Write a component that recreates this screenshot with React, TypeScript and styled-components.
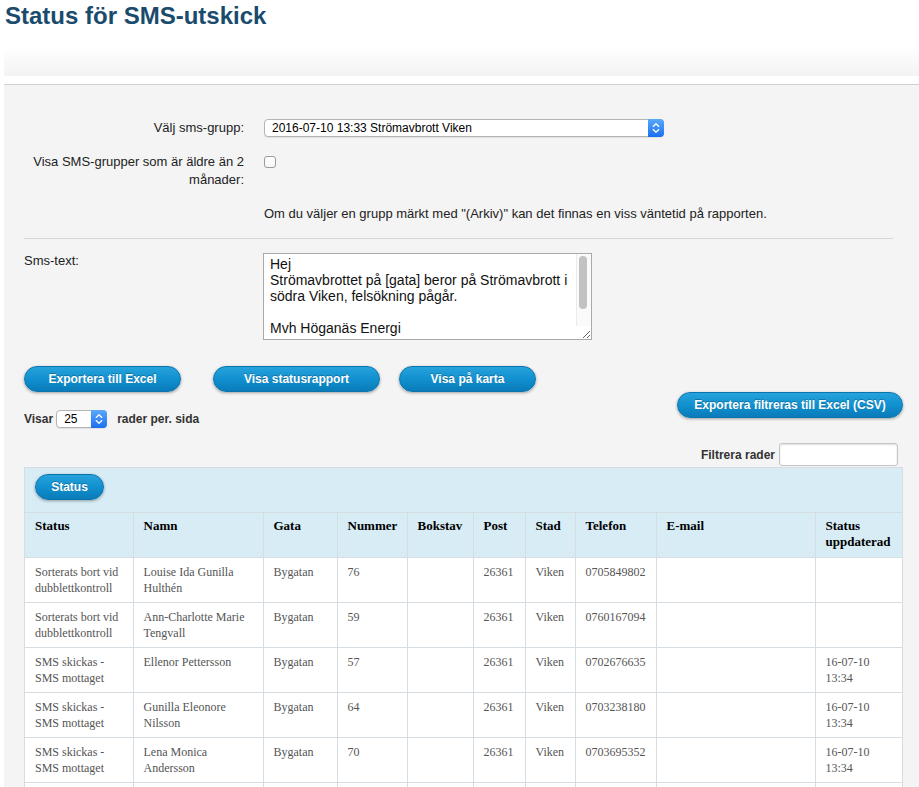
import React from "react";
import styled, { createGlobalStyle } from "styled-components";

const GlobalStyle = createGlobalStyle`
  html, body {
    margin: 0;
    padding: 0;
    background: #fff;
    overflow: hidden;
  }
  body {
    font-family: "Liberation Sans", Arial, sans-serif;
    color: #222;
  }
`;

const rows = [
  {
    status: "Sorterats bort vid dubblettkontroll",
    name: "Louise Ida Gunilla Hulthén",
    street: "Bygatan",
    no: "76",
    phone: "0705849802",
    updated: "",
  },
  {
    status: "Sorterats bort vid dubblettkontroll",
    name: "Ann-Charlotte Marie Tengvall",
    street: "Bygatan",
    no: "59",
    phone: "0760167094",
    updated: "",
  },
  {
    status: "SMS skickas - SMS mottaget",
    name: "Ellenor Pettersson",
    street: "Bygatan",
    no: "57",
    phone: "0702676635",
    updated: "16-07-10 13:34",
  },
  {
    status: "SMS skickas - SMS mottaget",
    name: "Gunilla Eleonore Nilsson",
    street: "Bygatan",
    no: "64",
    phone: "0703238180",
    updated: "16-07-10 13:34",
  },
  {
    status: "SMS skickas - SMS mottaget",
    name: "Lena Monica Andersson",
    street: "Bygatan",
    no: "70",
    phone: "0703695352",
    updated: "16-07-10 13:34",
  },
];

const columns = [
  { title: "Status", width: 108 },
  { title: "Namn", width: 130 },
  { title: "Gata", width: 74 },
  { title: "Nummer", width: 70 },
  { title: "Bokstav", width: 66 },
  { title: "Post", width: 52 },
  { title: "Stad", width: 50 },
  { title: "Telefon", width: 81 },
  { title: "E-mail", width: 159 },
  { title: "Status uppdaterad", width: 87 },
];

const smsText =
  "Hej\nStrömavbrottet på [gata] beror på Strömavbrott i södra Viken, felsökning pågår.\n\nMvh Höganäs Energi\n\n\n";

function Stepper() {
  return (
    <StepperBox>
      <svg width="16" height="18" viewBox="0 0 16 18">
        <path
          d="M5.2 7.4 L8 4.8 L10.8 7.4"
          fill="none"
          stroke="#fff"
          strokeWidth="1.3"
          strokeLinecap="round"
          strokeLinejoin="round"
        />
        <path
          d="M5.2 10.6 L8 13.2 L10.8 10.6"
          fill="none"
          stroke="#fff"
          strokeWidth="1.3"
          strokeLinecap="round"
          strokeLinejoin="round"
        />
      </svg>
    </StepperBox>
  );
}

function App() {
  return (
    <>
      <GlobalStyle />
      <Title>Status för SMS-utskick</Title>
      <Band />
      <Panel>
        <Form>
          <Label>Välj sms-grupp:</Label>
          <SelectWrap $width={400}>
            <Select defaultValue="a">
              <option value="a">2016-07-10 13:33 Strömavbrott Viken</option>
            </Select>
            <Stepper />
          </SelectWrap>

          <Label>Visa SMS-grupper som är äldre än 2 månader:</Label>
          <div>
            <Checkbox type="checkbox" />
          </div>

          <span />
          <Note>
            Om du väljer en grupp märkt med "(Arkiv)" kan det finnas en viss
            väntetid på rapporten.
          </Note>
        </Form>

        <Divider />

        <TextRow>
          <TextLabel>Sms-text:</TextLabel>
          <AreaWrap>
            <SmsArea defaultValue={smsText} />
            <ScrollTrack>
              <ScrollThumb />
            </ScrollTrack>
          </AreaWrap>
        </TextRow>

        <ButtonRow>
          <Button $width={157} $after={32}>
            Exportera till Excel
          </Button>
          <Button $width={167} $after={19}>
            Visa statusrapport
          </Button>
          <Button $width={137}>Visa på karta</Button>
        </ButtonRow>

        <ToolsRow>
          <PageSize>
            Visar
            <SelectWrap $width={51}>
              <Select defaultValue="25">
                <option value="25">25</option>
              </Select>
              <Stepper />
            </SelectWrap>
            rader per. sida
          </PageSize>
          <Button $width={226}>Exportera filtreras till Excel (CSV)</Button>
        </ToolsRow>

        <FilterRow>
          <BoldText>Filtrera rader</BoldText>
          <FilterInput type="text" />
        </FilterRow>

        <TableBox>
          <TableBar>
            <Button $width={69}>Status</Button>
          </TableBar>
          <Table>
            <colgroup>
              {columns.map((c) => (
                <col key={c.title} style={{ width: c.width }} />
              ))}
            </colgroup>
            <thead>
              <tr>
                {columns.map((c) => (
                  <Th key={c.title}>{c.title}</Th>
                ))}
              </tr>
            </thead>
            <tbody>
              {rows.map((r, i) => (
                <tr key={i}>
                  <Td>{r.status}</Td>
                  <Td>{r.name}</Td>
                  <Td>{r.street}</Td>
                  <Td>{r.no}</Td>
                  <Td></Td>
                  <Td>26361</Td>
                  <Td>Viken</Td>
                  <Td>{r.phone}</Td>
                  <Td></Td>
                  <Td>{r.updated}</Td>
                </tr>
              ))}
              <tr>
                {columns.map((c) => (
                  <Td key={c.title}></Td>
                ))}
              </tr>
            </tbody>
          </Table>
        </TableBox>
      </Panel>
    </>
  );
}

const Title = styled.h1`
  margin: 2px 0 0 5px;
  font-family: "Liberation Sans", Arial, sans-serif;
  font-size: 24px;
  font-weight: bold;
  color: #1a4b6d;
  line-height: 28px;
`;

const Band = styled.div`
  margin: 16px 0 0 4px;
  height: 30px;
  background: linear-gradient(#ffffff, #f3f3f3);
`;

const Panel = styled.div`
  margin: 8px 0 0 4px;
  border-top: 1px solid #d0d0d0;
  background: #f4f4f4;
  padding: 34px 16px 40px 20px;
`;

const Form = styled.div`
  display: grid;
  grid-template-columns: 220px 1fr;
  column-gap: 20px;
  row-gap: 16px;
  font-size: 13px;
  line-height: 18px;
`;

const Label = styled.div`
  text-align: right;
  color: #222;
`;

const Note = styled.div`
  color: #222;
`;

const SelectWrap = styled.div<{ $width: number }>`
  position: relative;
  display: inline-block;
  width: ${(p) => p.$width}px;
  height: 18px;
  vertical-align: middle;
`;

const Select = styled.select`
  appearance: none;
  -webkit-appearance: none;
  box-sizing: border-box;
  width: 100%;
  height: 18px;
  margin: 0;
  padding: 0 20px 0 7px;
  border: 1px solid #b4b4b4;
  border-radius: 4px;
  background: #fff;
  font-family: "Liberation Sans", Arial, sans-serif;
  font-size: 12px;
  line-height: 16px;
  color: #000;
  box-shadow: 0 1px 1px rgba(0, 0, 0, 0.08);
`;

const StepperBox = styled.div`
  position: absolute;
  top: 0;
  right: 0;
  width: 16px;
  height: 18px;
  border-radius: 0 4px 4px 0;
  background: linear-gradient(#5aa9fb, #1c6ff0);
  pointer-events: none;
  svg {
    display: block;
  }
`;

const Checkbox = styled.input`
  appearance: none;
  -webkit-appearance: none;
  width: 12px;
  height: 12px;
  margin: 3px 0 0 0;
  border: 1px solid #9a9a9a;
  border-radius: 3px;
  background: linear-gradient(#ffffff, #f6f6f6);
  display: block;
`;

const Divider = styled.hr`
  margin: 15px 10px 0 0;
  border: 0;
  border-top: 1px solid #d6d6d6;
  height: 0;
`;

const TextRow = styled.div`
  display: grid;
  grid-template-columns: 219px 1fr;
  column-gap: 20px;
  margin-top: 14px;
  align-items: start;
`;

const TextLabel = styled.div`
  font-size: 13px;
  line-height: 14px;
  padding-top: 1px;
  color: #222;
`;

const AreaWrap = styled.div`
  position: relative;
  width: 329px;
  height: 87px;
`;

const SmsArea = styled.textarea`
  box-sizing: border-box;
  width: 329px;
  height: 87px;
  margin: 0;
  padding: 2px 17px 2px 6px;
  border: 1px solid #a9a9a9;
  background: #fff;
  font-family: "Liberation Sans", Arial, sans-serif;
  font-size: 14px;
  line-height: 16px;
  color: #111;
  resize: both;
  overflow: hidden;
  display: block;
`;

const ScrollTrack = styled.div`
  position: absolute;
  top: 1px;
  right: 1px;
  width: 14px;
  height: 72px;
  background: #fafafa;
  border-left: 1px solid #ebebeb;
  pointer-events: none;
`;

const ScrollThumb = styled.div`
  margin: 2px 0 0 2px;
  width: 8px;
  height: 53px;
  border-radius: 4px;
  background: #c2c2c2;
`;

const ButtonRow = styled.div`
  display: flex;
  margin-top: 26px;
`;

const Button = styled.button<{ $width: number; $after?: number }>`
  width: ${(p) => p.$width}px;
  height: 26px;
  margin: 0 ${(p) => p.$after ?? 0}px 0 0;
  padding: 0;
  border: 1px solid #0b74ad;
  border-radius: 13px;
  background: linear-gradient(#27a3dc, #1190cf 50%, #0a7bb9);
  box-shadow: 0 1px 3px rgba(0, 0, 0, 0.35);
  color: #fff;
  font-family: "Liberation Sans", Arial, sans-serif;
  font-size: 12px;
  font-weight: bold;
  text-shadow: 0 -1px 0 rgba(0, 0, 0, 0.25);
  white-space: nowrap;
  cursor: pointer;
  flex: none;
`;

const ToolsRow = styled.div`
  display: flex;
  justify-content: space-between;
  align-items: flex-start;
`;

const PageSize = styled.div`
  margin-top: 18px;
  display: flex;
  align-items: center;
  font-size: 12px;
  font-weight: bold;
  color: #333;
  line-height: 18px;

  ${SelectWrap} {
    margin: 0 10px 0 3px;
  }
`;

const FilterRow = styled.div`
  display: flex;
  justify-content: flex-end;
  align-items: center;
  gap: 4px;
  margin-top: 15px;
  padding-right: 5px;
`;

const BoldText = styled.span`
  font-size: 12px;
  font-weight: bold;
  color: #333;
`;

const FilterInput = styled.input`
  box-sizing: border-box;
  width: 119px;
  height: 23px;
  margin: 0;
  border: 1px solid #c4c4c4;
  border-radius: 3px;
  background: #fff;
  box-shadow: inset 0 1px 2px rgba(0, 0, 0, 0.12);
`;

const TableBox = styled.div`
  margin-top: 1px;
  border: 1px solid #d5dde2;
  border-bottom: 0;
  background: #d7ecf5;
`;

const TableBar = styled.div`
  height: 44px;
  box-sizing: border-box;
  padding: 6px 10px 0 10px;
`;

const Table = styled.table`
  width: 100%;
  table-layout: fixed;
  border-collapse: collapse;
  font-family: "Liberation Serif", "Times New Roman", serif;
`;

const Th = styled.th`
  border: 1px solid #d5dde2;
  border-left: 0;
  padding: 5px 10px 7px 10px;
  height: 44px;
  box-sizing: border-box;
  vertical-align: top;
  text-align: left;
  font-size: 13px;
  line-height: 16px;
  font-weight: bold;
  color: #000;
  background: #d7ecf5;

  &:last-child {
    border-right: 0;
  }
`;

const Td = styled.td`
  border: 1px solid #d5dde2;
  border-left: 0;
  padding: 6px 10px 6px 10px;
  height: 44px;
  box-sizing: border-box;
  vertical-align: top;
  font-size: 12px;
  line-height: 16px;
  color: #555;
  background: #fff;

  &:last-child {
    border-right: 0;
  }
`;

export default App;
